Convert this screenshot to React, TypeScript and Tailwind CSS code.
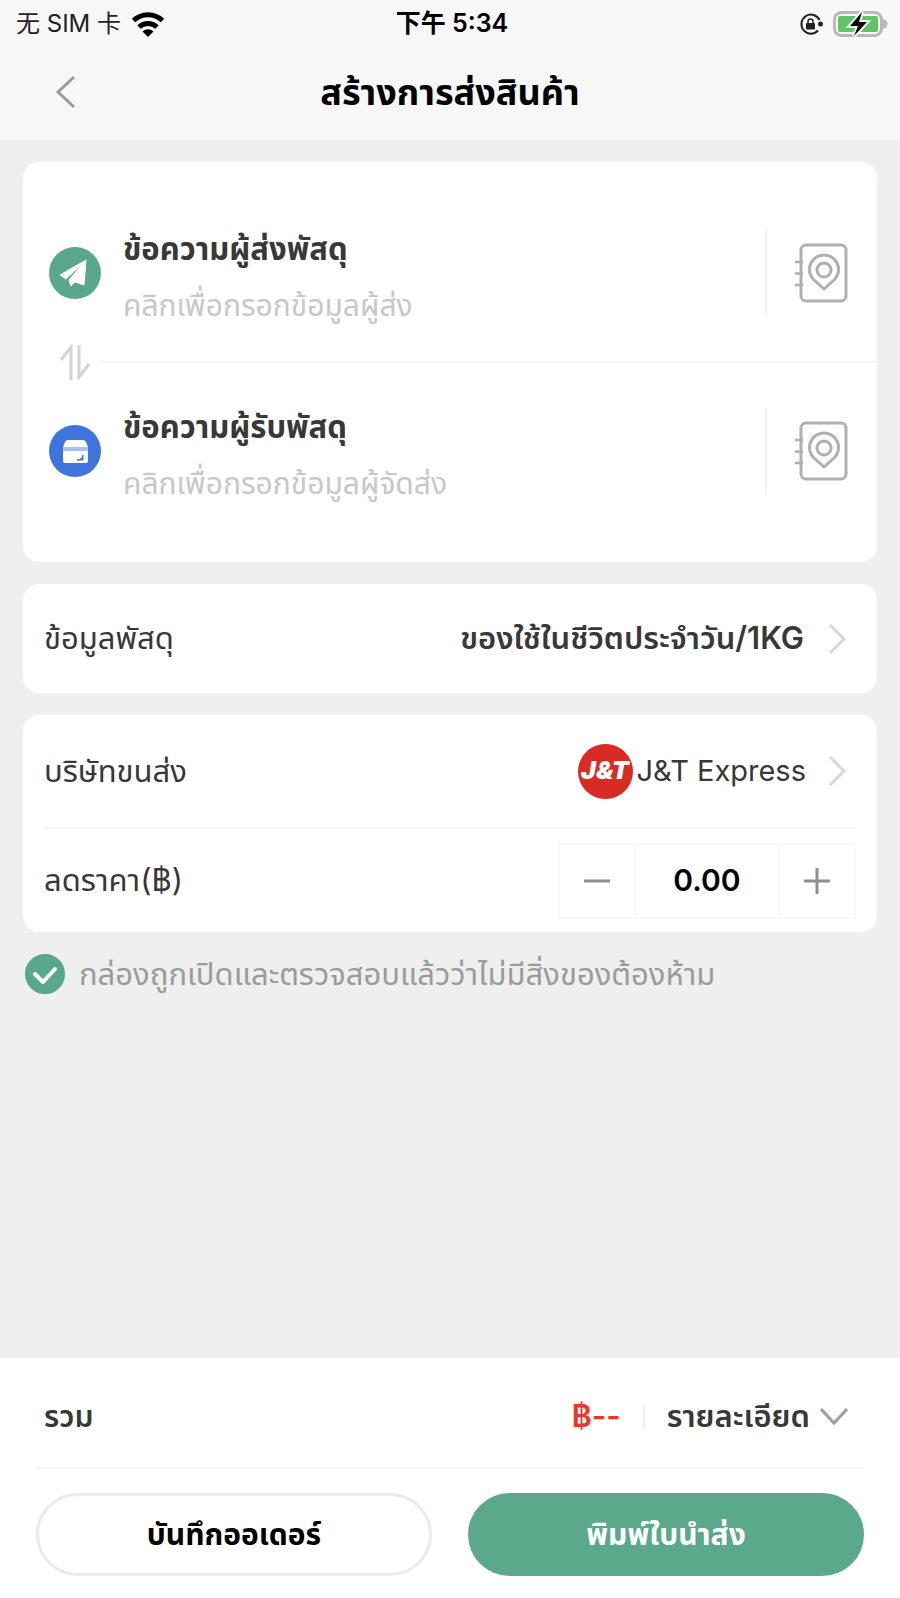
import { useState } from 'react';

const PARTIES = [
  { id: 'sender', title: 'ข้อความผู้ส่งพัสดุ', hint: 'คลิกเพื่อกรอกข้อมูลผู้ส่ง' },
  { id: 'receiver', title: 'ข้อความผู้รับพัสดุ', hint: 'คลิกเพื่อกรอกข้อมูลผู้จัดส่ง' },
] as const;

export default function App() {
  const [discount, setDiscount] = useState('0.00');
  const [checked, setChecked] = useState(true);

  // Change the discount by whole baht, never below zero
  const step = (by: number) => setDiscount(Math.max(0, (Number(discount) || 0) + by).toFixed(2));

  return (
    <div className="flex min-h-screen w-full flex-col bg-[#efefef] font-['Inter','Noto_Sans_Thai','Noto_Sans_CJK_SC',sans-serif] text-[#383838]">
      <header className="bg-[#f7f7f7]">
        <StatusBar />
        <div className="grid h-23 grid-cols-[1fr_auto_1fr] items-center px-12 pb-1">
          <button type="button" aria-label="Back" className="flex h-10 w-10 items-center">
            <svg width="36" height="36" viewBox="0 0 36 36" fill="none" stroke="#9b9b9b" strokeWidth="3">
              <path d="M26 3 10 18l16 15" />
            </svg>
          </button>
          <h1 className="text-[36px] font-bold text-black">สร้างการส่งสินค้า</h1>
        </div>
      </header>

      <main className="flex flex-1 flex-col gap-[22px] px-[23px] pt-[22px]">
        <section className="flex flex-col gap-[27px] rounded-2xl bg-white py-[67px]">
          <Party {...PARTIES[0]} />
          <div className="flex items-center gap-2 pl-9">
            <button type="button" aria-label="Swap">
              <svg width="32" height="36" viewBox="0 0 32 36" fill="none" stroke="#d4d4d4" strokeWidth="3">
                <path d="M2 16 12 3v33M20 1v32l10-13" />
              </svg>
            </button>
            <div className="h-[2px] flex-1 bg-[#f5f5f5]" />
          </div>
          <Party {...PARTIES[1]} />
        </section>

        <section className="rounded-2xl bg-white px-[21px]">
          <button type="button" className="flex h-[109px] w-full items-center justify-between">
            <span className="text-[31px]">ข้อมูลพัสดุ</span>
            <span className="flex items-center gap-6 text-[31px] font-semibold">
              ของใช้ในชีวิตประจำวัน/1KG
              <Chevron />
            </span>
          </button>
        </section>

        <section className="rounded-2xl bg-white px-[21px]">
          <button type="button" className="flex h-[114px] w-full items-center justify-between border-b-2 border-[#f5f5f5]">
            <span className="text-[31px]">บริษัทขนส่ง</span>
            <span className="flex items-center gap-1 text-[29px]">
              <span className="flex h-[55px] w-[55px] items-center justify-center rounded-full bg-[#d72b23] text-[25px] font-black text-white italic">
                J&T
              </span>
              <span className="mr-[18px]">J&T Express</span>
              <Chevron />
            </span>
          </button>
          <div className="flex h-[103px] items-center justify-between">
            <label htmlFor="discount" className="text-[31px]">ลดราคา(฿)</label>
            <div className="flex h-[76px] w-[298px] border-2 border-[#f8f8f8]">
              <button type="button" aria-label="Decrease" onClick={() => step(-1)} className="flex w-[74px] items-center justify-center">
                <svg width="26" height="26" viewBox="0 0 26 26" stroke="#8f8f8f" strokeWidth="3"><path d="M0 13h26" /></svg>
              </button>
              <input
                id="discount"
                inputMode="decimal"
                className="w-0 flex-1 border-x-2 border-[#f8f8f8] text-center text-[30px] font-semibold text-black outline-none"
                value={discount}
                onChange={e => setDiscount(e.target.value)}
              />
              <button type="button" aria-label="Increase" onClick={() => step(1)} className="flex w-[74px] items-center justify-center">
                <svg width="26" height="26" viewBox="0 0 26 26" stroke="#8f8f8f" strokeWidth="3"><path d="M0 13h26M13 0v26" /></svg>
              </button>
            </div>
          </div>
        </section>

        <label className="flex items-center gap-[14px] pl-[2px] text-[31px] leading-10 text-[#9b9b9b]">
          <span className="relative h-10 w-10 shrink-0">
            <input
              type="checkbox"
              checked={checked}
              onChange={e => setChecked(e.target.checked)}
              className="block h-10 w-10 appearance-none rounded-full border-2 border-[#c8c8c8] checked:border-[#5aa88b] checked:bg-[#5aa88b]"
            />
            <svg className="pointer-events-none absolute inset-0" width="40" height="40" viewBox="0 0 40 40" fill="none" stroke="white" strokeWidth="4" strokeLinecap="round" strokeLinejoin="round">
              <path d="m10 20 8 8 12-13" />
            </svg>
          </span>
          กล่องถูกเปิดและตรวจสอบแล้วว่าไม่มีสิ่งของต้องห้าม
        </label>
      </main>

      <footer className="bg-white px-9 pb-[22px]">
        <div className="flex h-[111px] items-center justify-between border-b-2 border-[#f5f5f5] pt-2 pr-4 pl-2 font-semibold">
          <span className="text-[30px]">รวม</span>
          <div className="flex items-center text-[31px]">
            <span className="text-[#e8382b]">฿--</span>
            <span className="mx-[22px] h-6 w-[2px] bg-[#f0f0f0]" />
            <button type="button" className="flex items-center gap-[10px]">
              รายละเอียด
              <svg width="28" height="18" viewBox="0 0 28 18" fill="none" stroke="#a0a0a0" strokeWidth="3">
                <path d="m1 1 13 14L27 1" />
              </svg>
            </button>
          </div>
        </div>
        <div className="mt-6 grid grid-cols-2 gap-9 text-[30px] font-bold">
          <button type="button" className="h-[83px] rounded-full border-[3px] border-[#ebebeb] text-black">บันทึกออเดอร์</button>
          <button type="button" className="h-[83px] rounded-full bg-[#5ba88b] text-white">พิมพ์ใบนำส่ง</button>
        </div>
      </footer>
    </div>
  );
}

function StatusBar() {
  return (
    <div className="grid h-12 grid-cols-3 items-center pr-3 pl-4 text-[24px] text-[#222222]">
      <div className="flex items-center gap-[10px]">
        <span>无 SIM 卡</span>
        <svg width="34" height="26" viewBox="0 0 34 26" fill="none" stroke="black" strokeWidth="5">
          <path d="M2.500 9.500a21 21 0 0 1 29 0" />
          <path d="M8 16a13 13 0 0 1 18 0" />
          <path d="m17 26-5.500-5.500a8 8 0 0 1 11 0z" fill="black" stroke="none" />
        </svg>
      </div>
      <span className="text-center text-[25px] font-semibold text-black">下午 5:34</span>
      <div className="flex items-center justify-end gap-[10px]">
        <svg width="24" height="24" viewBox="0 0 24 24" fill="none" stroke="#222222" strokeWidth="2">
          <path d="M19 18.500A9.500 9.500 0 1 1 20.500 8" />
          <circle cx="21.500" cy="12" r="2.500" fill="#222222" stroke="none" />
          <rect x="7" y="11" width="9" height="6.500" rx="1" fill="#222222" stroke="none" />
          <path d="M9 12V9.500a2.500 2.500 0 0 1 5 0V12" strokeWidth="1.500" />
        </svg>
        <svg width="55" height="28" viewBox="0 0 55 28">
          <rect x="1.500" y="2.500" width="47" height="23" rx="7" fill="#f7f7f7" stroke="#b8b8b8" strokeWidth="3" />
          <path d="M50 9c6 1 6 9 0 10z" fill="#b8b8b8" />
          <rect x="5" y="6" width="40" height="16" rx="2" fill="#5fc466" />
          <path d="M29 2 17 16h8l-4 10 13-14h-8z" fill="black" stroke="#f7f7f7" strokeWidth="4" paintOrder="stroke" />
        </svg>
      </div>
    </div>
  );
}

interface PartyProps {
  id: 'sender' | 'receiver';
  title: string;
  hint: string;
}

function Party({ id, title, hint }: PartyProps) {
  return (
    <div className="flex h-[88px] items-center pl-[26px]">
      {id === 'sender' ? <SendIcon /> : <BoxIcon />}
      <button type="button" className="ml-[22px] flex flex-1 flex-col gap-4 pt-2 text-left text-[31px] leading-10">
        <span className="font-bold">{title}</span>
        <span className="text-[30px] text-[#c8c8c8]">{hint}</span>
      </button>
      <button type="button" aria-label="Address book" className="flex h-full items-center border-l-2 border-[#f5f5f5] pr-[29px] pl-[27px]">
        <svg width="54" height="60" viewBox="0 0 54 60" fill="none" stroke="#b0b0b0" strokeWidth="3">
          <rect x="7" y="2" width="45" height="56" rx="5" />
          <path d="M1 19h8M1 30.500h8M1 42h8" strokeWidth="2.500" />
          <path d="M30 46 19.500 36.500a14.500 14.500 0 1 1 21 0z" strokeLinejoin="round" />
          <circle cx="30" cy="27" r="7" />
        </svg>
      </button>
    </div>
  );
}

function SendIcon() {
  return (
    <svg width="52" height="52" viewBox="0 0 52 52">
      <circle cx="26" cy="26" r="26" fill="#5aa88b" />
      <path d="M37 13 11 28l6 4zM37 13 20 33l2 6 4-4 9 3z" fill="white" stroke="white" strokeLinejoin="round" />
    </svg>
  );
}

function BoxIcon() {
  return (
    <svg width="52" height="52" viewBox="0 0 52 52">
      <circle cx="26" cy="26" r="26" fill="#3f74dc" />
      <path d="M19 15h15q2 0 3 2l2 5H14l2-5q1-2 3-2z" fill="white" />
      <path d="M14 22h25v4H14z" fill="#a9c0f0" />
      <path d="M14 26h25v10q0 2-2 2H16q-2 0-2-2z" fill="white" />
      <path d="M28 35q5 0 6-5v5z" fill="#3f74dc" stroke="#3f74dc" />
    </svg>
  );
}

function Chevron() {
  return (
    <svg className="mr-[10px]" width="18" height="30" viewBox="0 0 18 30" fill="none" stroke="#d8d8d8" strokeWidth="3">
      <path d="m2 1 14 14L2 29" />
    </svg>
  );
}
